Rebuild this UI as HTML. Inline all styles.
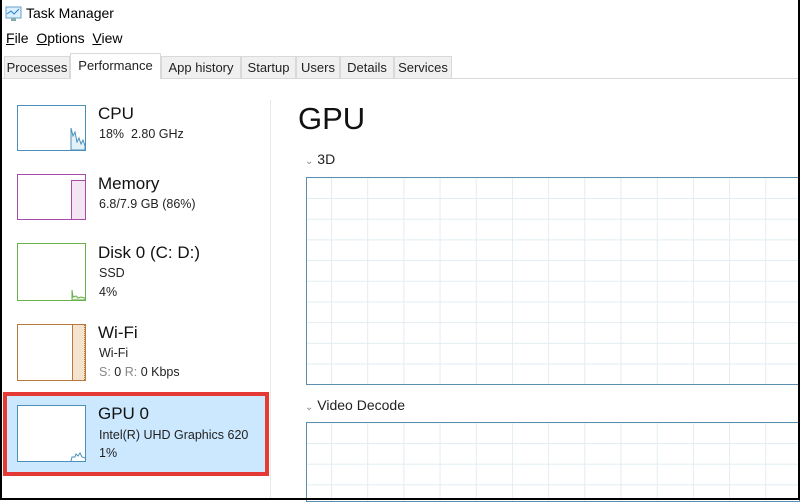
<!DOCTYPE html>
<html><head><meta charset="utf-8"><style>
*{margin:0;padding:0;box-sizing:border-box}
body{width:800px;height:500px;overflow:hidden;background:#fff;font-family:"Liberation Sans",sans-serif;color:#000;position:relative}
.a{position:absolute}
.tab{position:absolute;top:56px;height:22px;background:#f0f0f0;border:1px solid #d9d9d9;border-bottom:none;font-size:13px;line-height:21px;text-align:center;color:#222}
.thumb{position:absolute;left:17px;width:69px;background:#fff;border:1px solid}
.t1{position:absolute;left:98px;font-size:17px;color:#111}
.t2{position:absolute;left:99px;font-size:12.5px;color:#222}
.grid{background-color:#fff;background-image:linear-gradient(90deg,#e2edf2 1px,transparent 1px),linear-gradient(#e2edf2 1px,transparent 1px);background-size:36.2px 20.7px;background-position:24px 20px}
</style></head><body>
<svg class="a" style="left:5px;top:6px" width="18" height="16"><rect x="1" y="1" width="15" height="11" fill="#dbefff" stroke="#6aa0c8"/><path d="M2 8 L6 5 L9 8 L14 3" stroke="#2b7fd0" fill="none"/><rect x="6" y="12" width="5" height="3" fill="#8aa"/></svg>
<div class="a" style="left:26px;top:5px;font-size:14px">Task Manager</div>
<div class="a" style="left:6px;top:30px;font-size:14px"><u>F</u>ile&nbsp;&nbsp;<u>O</u>ptions&nbsp;&nbsp;<u>V</u>iew</div>
<div class="a" style="left:2px;top:78px;width:796px;height:1px;background:#d9d9d9"></div>
<div class="tab" style="left:4px;width:66px">Processes</div>
<div class="tab" style="left:70px;width:91px;top:53px;height:26px;background:#fff;line-height:24px">Performance</div>
<div class="tab" style="left:161px;width:80px">App history</div>
<div class="tab" style="left:241px;width:55px">Startup</div>
<div class="tab" style="left:296px;width:44px">Users</div>
<div class="tab" style="left:340px;width:54px">Details</div>
<div class="tab" style="left:394px;width:58px">Services</div>
<div class="a" style="left:270px;top:100px;width:1px;height:398px;background:#e8e8e8"></div>

<div class="thumb" style="top:105px;height:46px;border-color:#4a90b8"><svg width="67" height="44" style="position:absolute"><path d="M53 44 L53 22 L55 30 L57 26 L59 36 L61 32 L63 38 L65 34 L67 40 L67 44Z" fill="#e4f1f8" stroke="#4a90b8"/></svg></div>
<div class="t1" style="top:104px">CPU</div><div class="t2" style="top:127px">18%&nbsp; 2.80 GHz</div>

<div class="thumb" style="top:174px;height:46px;border-color:#a84aa8"><div class="a" style="left:53px;top:5px;width:14px;height:39px;background:#f3e6f3;border-left:1px solid #a84aa8;border-top:1px solid #a84aa8"></div></div>
<div class="t1" style="top:174px">Memory</div><div class="t2" style="top:197px">6.8/7.9 GB (86%)</div>

<div class="thumb" style="top:243px;height:58px;border-color:#6ab04a"><svg width="67" height="56" style="position:absolute"><path d="M54 56 L54 46 L55 53 L58 52 L60 54 L63 53 L67 54 L67 56Z" fill="#e8f4e0" stroke="#6ab04a"/></svg></div>
<div class="t1" style="top:243px">Disk 0 (C: D:)</div><div class="t2" style="top:266px">SSD</div><div class="t2" style="top:285px">4%</div>

<div class="thumb" style="top:324px;height:57px;border-color:#b87a3a"><div class="a" style="left:54px;top:0;width:13px;height:55px;background:#f5e3d0;border-left:1px solid #b87a3a;border-right:1px dotted #b87a3a"></div></div>
<div class="t1" style="top:323px">Wi-Fi</div><div class="t2" style="top:346px">Wi-Fi</div><div class="t2" style="top:365px"><span style="color:#888">S:</span> 0 <span style="color:#888">R:</span> 0 Kbps</div>

<div class="a" style="left:3px;top:392px;width:266px;height:84px;background:#cce8ff;border:4px solid #e53935"></div>
<div class="thumb" style="top:405px;height:57px;border-color:#4a90b8"><svg width="67" height="55" style="position:absolute"><path d="M53 55 L54 51 L57 51 L58 48 L60 50 L62 47 L64 51 L67 52" fill="none" stroke="#4a90b8"/></svg></div>
<div class="t1" style="top:404px">GPU 0</div><div class="t2" style="top:428px">Intel(R) UHD Graphics 620</div><div class="t2" style="top:446px">1%</div>

<div class="a" style="left:298px;top:101px;font-size:31px;color:#111">GPU</div>
<div class="a" style="left:305px;top:151px;font-size:14px;color:#222"><span style="font-size:10px;color:#888">&#8964;</span> 3D</div>
<div class="a grid" style="left:306px;top:177px;width:494px;height:208px;border:1px solid #5a8fb0"></div>
<div class="a" style="left:305px;top:397px;font-size:14px;color:#222"><span style="font-size:10px;color:#888">&#8964;</span> Video Decode</div>
<div class="a grid" style="left:306px;top:422px;width:494px;height:80px;border:1px solid #5a8fb0"></div>
<div class="a" style="left:0;top:0;width:2px;height:500px;background:#000"></div>
<div class="a" style="left:0;bottom:0;width:800px;height:2px;background:#000"></div>
<div class="a" style="right:0;top:0;width:2px;height:500px;background:#000"></div>
</body></html>
